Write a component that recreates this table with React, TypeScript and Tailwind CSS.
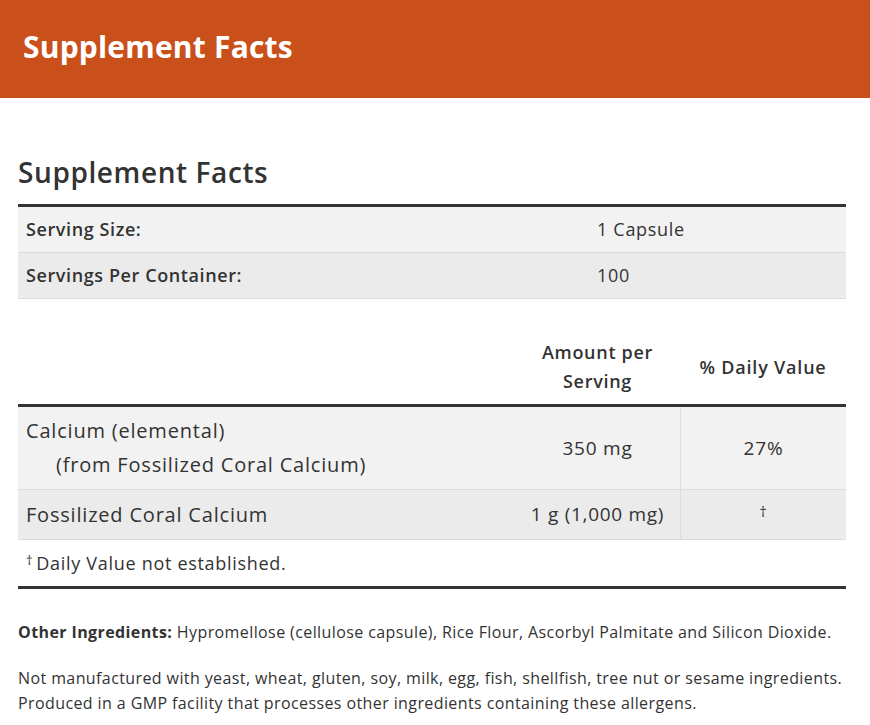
export default function App() {
  return (
    <div className="min-h-screen bg-white text-[#333] font-['Open_Sans','Noto_Sans',sans-serif]">
      <div className="h-[98px] bg-[#c9501a] flex items-center pl-[23px]">
        <h1 className="text-[30px] font-bold text-white tracking-[0.2px] pb-[6px]">Supplement Facts</h1>
      </div>

      <div className="pl-[18px] pr-[24px]">
        <h2 className="text-[28px] font-semibold tracking-[0.6px] mt-[54px] leading-[40px] mb-[12px] text-[#333]">Supplement Facts</h2>

        <div className="border-t-[3px] border-[#333]">
          <div className="grid grid-cols-[579px_1fr] h-[46px] bg-[#f2f2f2] border-b border-[#dcdcdc] items-center text-[18px] tracking-[0.6px]">
            <div className="pl-[8px] font-semibold">Serving Size:</div>
            <div className="tracking-[0.7px]">1 Capsule</div>
          </div>
          <div className="grid grid-cols-[579px_1fr] h-[46px] bg-[#ebebeb] border-b border-[#dcdcdc] items-center text-[18px] tracking-[0.6px]">
            <div className="pl-[8px] font-semibold">Servings Per Container:</div>
            <div className="tracking-[0.7px]">100</div>
          </div>
        </div>

        <div className="mt-[31px]">
          <div className="grid grid-cols-[497px_165px_1fr] h-[74px] items-center text-[18px] font-semibold tracking-[0.7px] leading-[29px]">
            <div />
            <div className="text-center">Amount per<br />Serving</div>
            <div className="text-center tracking-[0.8px]">% Daily Value</div>
          </div>
          <div className="border-t-[3px] border-[#333]">
            <div className="grid grid-cols-[497px_165px_1fr] h-[83px] bg-[#f2f2f2] border-b border-[#dcdcdc] text-[20px] tracking-[0.8px] items-stretch">
              <div className="pl-[8px] flex flex-col justify-center leading-[34px]">
                <span>Calcium (elemental)</span>
                <span className="pl-[30px]">(from Fossilized Coral Calcium)</span>
              </div>
              <div className="flex items-center justify-center text-[19px]">350 mg</div>
              <div className="flex items-center justify-center border-l border-[#dcdcdc] text-[19px]">27%</div>
            </div>
            <div className="grid grid-cols-[497px_165px_1fr] h-[50px] bg-[#ebebeb] border-b border-[#dcdcdc] text-[20px] tracking-[0.8px] items-stretch">
              <div className="pl-[8px] flex items-center">Fossilized Coral Calcium</div>
              <div className="flex items-center justify-center text-[19px] tracking-[0.7px]">1 g (1,000 mg)</div>
              <div className="flex items-center justify-center border-l border-[#dcdcdc] text-[14px] pb-[6px]">†</div>
            </div>
            <div className="h-[46px] flex items-center pl-[8px] text-[18px] tracking-[0.7px] border-b-[3px] border-[#333] box-content">
              <span className="text-[13px] mr-[3px] -mt-[5px]">†</span>Daily Value not established.
            </div>
          </div>
        </div>

        <p className="mt-[31px] text-[16px] tracking-[0.4px] leading-[25px]">
          <span className="font-bold">Other Ingredients:</span> Hypromellose (cellulose capsule), Rice Flour, Ascorbyl Palmitate and Silicon Dioxide.
        </p>
        <p className="mt-[21px] text-[16px] tracking-[0.4px] leading-[25px]">
          Not manufactured with yeast, wheat, gluten, soy, milk, egg, fish, shellfish, tree nut or sesame ingredients.
          <br />
          Produced in a GMP facility that processes other ingredients containing these allergens.
        </p>
      </div>
    </div>
  );
}
